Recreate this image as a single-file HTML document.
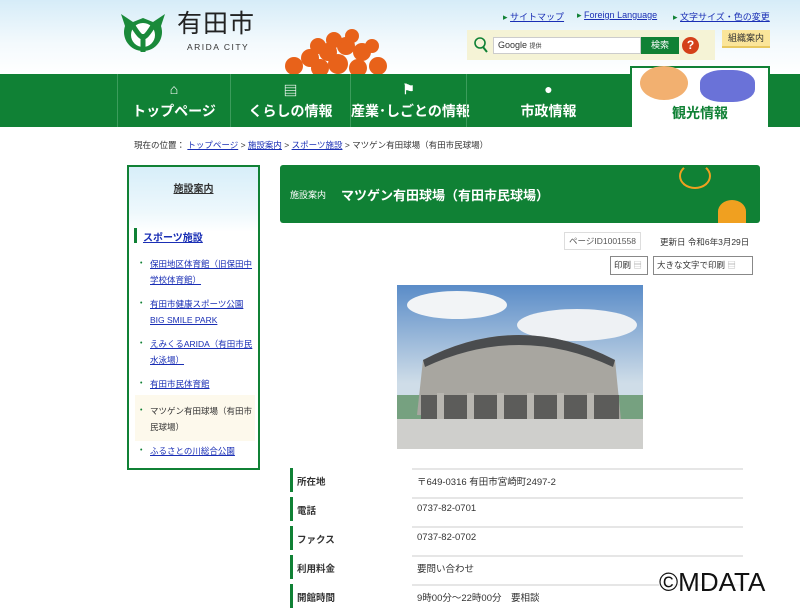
<!DOCTYPE html>
<html><head><meta charset="utf-8"><style>
*{margin:0;padding:0;box-sizing:border-box}
body{width:800px;height:600px;overflow:hidden;background:#fff;font-family:"Liberation Sans","Noto Sans CJK JP",sans-serif;font-size:10px;color:#333;position:relative}
.a{position:absolute}
a{color:#1a2fb5;text-decoration:underline}
#hdr{left:0;top:0;width:800px;height:74px;background:linear-gradient(#d6ecf8,#f4fafd 60%,#fff)}
#nav{left:0;top:74px;width:800px;height:53px;background:#108135}
.ni{top:74px;height:53px;border-left:1px solid #3c9c5c;color:#fff;text-align:center;font-weight:bold;font-size:14px;white-space:nowrap}
.ni span{position:absolute;left:0;right:0;top:29px;line-height:16px}
.ni i{position:absolute;left:50%;top:7px;transform:translateX(-50%);font-style:normal;font-size:14px}
.row{left:412px;width:331px;height:29px;border-top:2px solid #e6e6e6}
.lb{left:290px;width:3px;height:24px;background:#108135}
.lt{left:297px;font-weight:bold;font-size:9.5px}
.vt{left:417px;font-size:9.5px}
.side li{list-style:none;position:absolute;left:150px;width:105px;font-size:8.5px;line-height:16px}
.side li:before{content:"•";position:absolute;left:-10px;color:#108135;font-size:7px}
</style></head><body>
<div id="hdr" class="a"></div>
<svg class="a" style="left:119px;top:12px" width="48" height="42" viewBox="0 0 48 42"><path d="M2 2 L14 10 L24 6 L34 10 L46 2 L42 14 A19 19 0 1 1 6 14 Z" fill="#1a8a3a"/><circle cx="24" cy="23" r="12" fill="#fff"/><path d="M24 40 L24 22 M14 14 Q24 30 24 22 Q24 30 34 14" stroke="#1a8a3a" stroke-width="5" fill="none"/></svg>
<div class="a" style="left:177px;top:9px;font-size:25px;line-height:30px;color:#222;letter-spacing:1px">有田市</div>
<div class="a" style="left:187px;top:42px;font-size:8.5px;letter-spacing:1.5px;color:#333">ARIDA CITY</div>
<svg class="a" style="left:272px;top:28px" width="122" height="46"><g fill="#e8621a"><circle cx="22" cy="38" r="9"/><circle cx="38" cy="30" r="9"/><circle cx="56" cy="24" r="9"/><circle cx="74" cy="18" r="9"/><circle cx="90" cy="24" r="9"/><circle cx="106" cy="38" r="9"/><circle cx="48" cy="40" r="9"/><circle cx="66" cy="36" r="10"/><circle cx="86" cy="40" r="9"/><circle cx="62" cy="12" r="8"/><circle cx="80" cy="8" r="7"/><circle cx="46" cy="18" r="8"/><circle cx="100" cy="18" r="7"/></g></svg>
<div class="a" style="left:503px;top:10px;font-size:9px"><span style="color:#108135">▸</span> <a>サイトマップ</a></div>
<div class="a" style="left:577px;top:10px;font-size:9px"><span style="color:#108135">▸</span> <a>Foreign Language</a></div>
<div class="a" style="left:673px;top:10px;font-size:9px"><span style="color:#108135">▸</span> <a>文字サイズ・色の変更</a></div>
<div class="a" style="left:467px;top:30px;width:248px;height:30px;background:#f5f3d6"></div>
<svg class="a" style="left:473px;top:37px" width="16" height="16"><circle cx="7" cy="6" r="5" stroke="#108135" stroke-width="1.6" fill="none"/><path d="M10 10 L14 15" stroke="#108135" stroke-width="2"/></svg>
<div class="a" style="left:493px;top:37px;width:148px;height:17px;background:#fff;border:1px solid #ccc;font-size:9px;padding:2px 4px">Google <span style="font-size:6px">提供</span></div>
<div class="a" style="left:641px;top:37px;width:38px;height:17px;background:#108135;color:#fff;font-size:9px;text-align:center;line-height:17px">検索</div>
<div class="a" style="left:682px;top:37px;width:17px;height:17px;border-radius:50%;background:#d4401a;color:#fff;font-weight:bold;text-align:center;line-height:17px;font-size:12px">?</div>
<div class="a" style="left:722px;top:30px;width:48px;height:18px;background:#fbe59a;border-bottom:2px solid #e8c860;font-size:9px;text-align:center;line-height:16px">組織案内</div>
<div id="nav" class="a"></div>
<div class="a ni" style="left:117px;width:113px"><i>⌂</i><span>トップページ</span></div>
<div class="a ni" style="left:230px;width:120px"><i>▤</i><span>くらしの情報</span></div>
<div class="a ni" style="left:350px;width:116px"><i>⚑</i><span>産業･しごとの情報</span></div>
<div class="a ni" style="left:466px;width:164px"><i>●</i><span>市政情報</span></div>
<div class="a" style="left:630px;top:66px;width:140px;height:61px;background:#fff;border:2px solid #108135;border-bottom:none"></div>
<div class="a" style="left:640px;top:66px;width:48px;height:34px;border-radius:50%;background:#f2b070"></div>
<div class="a" style="left:700px;top:70px;width:55px;height:32px;background:#6a72d8;border-radius:40%"></div>
<div class="a" style="left:672px;top:103px;font-size:14px;font-weight:bold;color:#108135">観光情報</div>
<div class="a" style="left:134px;top:139px;font-size:8.5px">現在の位置： <a>トップページ</a> &gt; <a>施設案内</a> &gt; <a>スポーツ施設</a> &gt; マツゲン有田球場（有田市民球場）</div>
<div class="a" style="left:127px;top:165px;width:133px;height:305px;border:2px solid #108135;background:#fff"></div>
<div class="a" style="left:129px;top:167px;width:129px;height:65px;background:linear-gradient(#d7eef9,#eef8fc 70%,#fff)"></div>
<div class="a" style="left:129px;top:180px;width:129px;text-align:center;font-weight:bold;font-size:10px;text-decoration:underline">施設案内</div>
<div class="a" style="left:134px;top:228px;width:3px;height:15px;background:#108135"></div>
<div class="a" style="left:143px;top:229px;font-weight:bold;font-size:10px"><a>スポーツ施設</a></div>
<div class="a" style="left:135px;top:395px;width:120px;height:46px;background:#fdf9ec"></div>
<ul class="side">
<li style="top:256px"><a>保田地区体育館（旧保田中学校体育館）</a></li>
<li style="top:296px"><a>有田市健康スポーツ公園 BIG SMILE PARK</a></li>
<li style="top:336px"><a>えみくるARIDA（有田市民水泳場）</a></li>
<li style="top:376px"><a>有田市民体育館</a></li>
<li style="top:403px">マツゲン有田球場（有田市民球場）</li>
<li style="top:443px"><a>ふるさとの川総合公園</a></li>
</ul>
<div class="a" style="left:280px;top:165px;width:480px;height:58px;background:#108135;border-radius:3px"></div>
<div class="a" style="left:290px;top:188px;color:#fff;font-size:9px">施設案内</div>
<div class="a" style="left:341px;top:185px;color:#fff;font-size:13px;font-weight:bold">マツゲン有田球場（有田市民球場）</div>
<div class="a" style="left:679px;top:163px;width:32px;height:26px;border:2px solid #f0a020;border-radius:50%;border-top-color:transparent"></div>
<div class="a" style="left:718px;top:200px;width:28px;height:23px;border-radius:50% 50% 0 0;background:#f0a020"></div>
<div class="a" style="left:564px;top:232px;width:77px;height:18px;border:1px solid #ddd;font-size:8.5px;line-height:16px;text-align:center;color:#555">ページID1001558</div>
<div class="a" style="left:660px;top:236px;font-size:8.5px">更新日 令和6年3月29日</div>
<div class="a" style="left:610px;top:256px;width:38px;height:19px;border:1px solid #888;font-size:8.5px;line-height:17px;padding-left:3px">印刷 <span style="color:#aaa">▤</span></div>
<div class="a" style="left:653px;top:256px;width:100px;height:19px;border:1px solid #888;font-size:8.5px;line-height:17px;padding-left:3px">大きな文字で印刷 <span style="color:#aaa">▤</span></div>
<svg class="a" style="left:397px;top:285px" width="246" height="164"><defs><linearGradient id="s" x1="0" y1="0" x2="0" y2="1"><stop offset="0" stop-color="#5a8cc8"/><stop offset="0.6" stop-color="#cfdde8"/></linearGradient></defs><rect width="246" height="164" fill="url(#s)"/><ellipse cx="60" cy="20" rx="50" ry="14" fill="#f2f4f6"/><ellipse cx="180" cy="40" rx="60" ry="16" fill="#eef1f4"/><rect x="0" y="110" width="246" height="54" fill="#3a7a3a" opacity=".6"/><path d="M20 130 L26 75 Q122 25 218 75 L224 135 Z" fill="#a8a6a0"/><path d="M26 75 Q122 25 218 75 L216 82 Q122 38 28 82 Z" fill="#4a4c4e"/><rect x="24" y="110" width="198" height="24" fill="#5c5c5a"/><g fill="#b8b6b0"><rect x="40" y="108" width="7" height="28"/><rect x="70" y="108" width="7" height="28"/><rect x="100" y="108" width="7" height="28"/><rect x="130" y="108" width="7" height="28"/><rect x="160" y="108" width="7" height="28"/><rect x="190" y="108" width="7" height="28"/></g><rect x="0" y="134" width="246" height="30" fill="#cfcfcc"/></svg>
<div class="a row" style="top:468px"></div><div class="a lb" style="top:468px"></div><div class="a lt" style="top:474px">所在地</div><div class="a vt" style="top:474px">〒649-0316 有田市宮崎町2497-2</div>
<div class="a row" style="top:497px"></div><div class="a lb" style="top:497px"></div><div class="a lt" style="top:503px">電話</div><div class="a vt" style="top:503px">0737-82-0701</div>
<div class="a row" style="top:526px"></div><div class="a lb" style="top:526px"></div><div class="a lt" style="top:532px">ファクス</div><div class="a vt" style="top:532px">0737-82-0702</div>
<div class="a row" style="top:555px"></div><div class="a lb" style="top:555px"></div><div class="a lt" style="top:561px">利用料金</div><div class="a vt" style="top:561px">要問い合わせ</div>
<div class="a row" style="top:584px"></div><div class="a lb" style="top:584px"></div><div class="a lt" style="top:590px">開館時間</div><div class="a vt" style="top:590px">9時00分～22時00分　要相談</div>
<div class="a" style="left:659px;top:567px;font-size:26px;color:#111;background:rgba(255,255,255,.6)">©MDATA</div>
</body></html>
